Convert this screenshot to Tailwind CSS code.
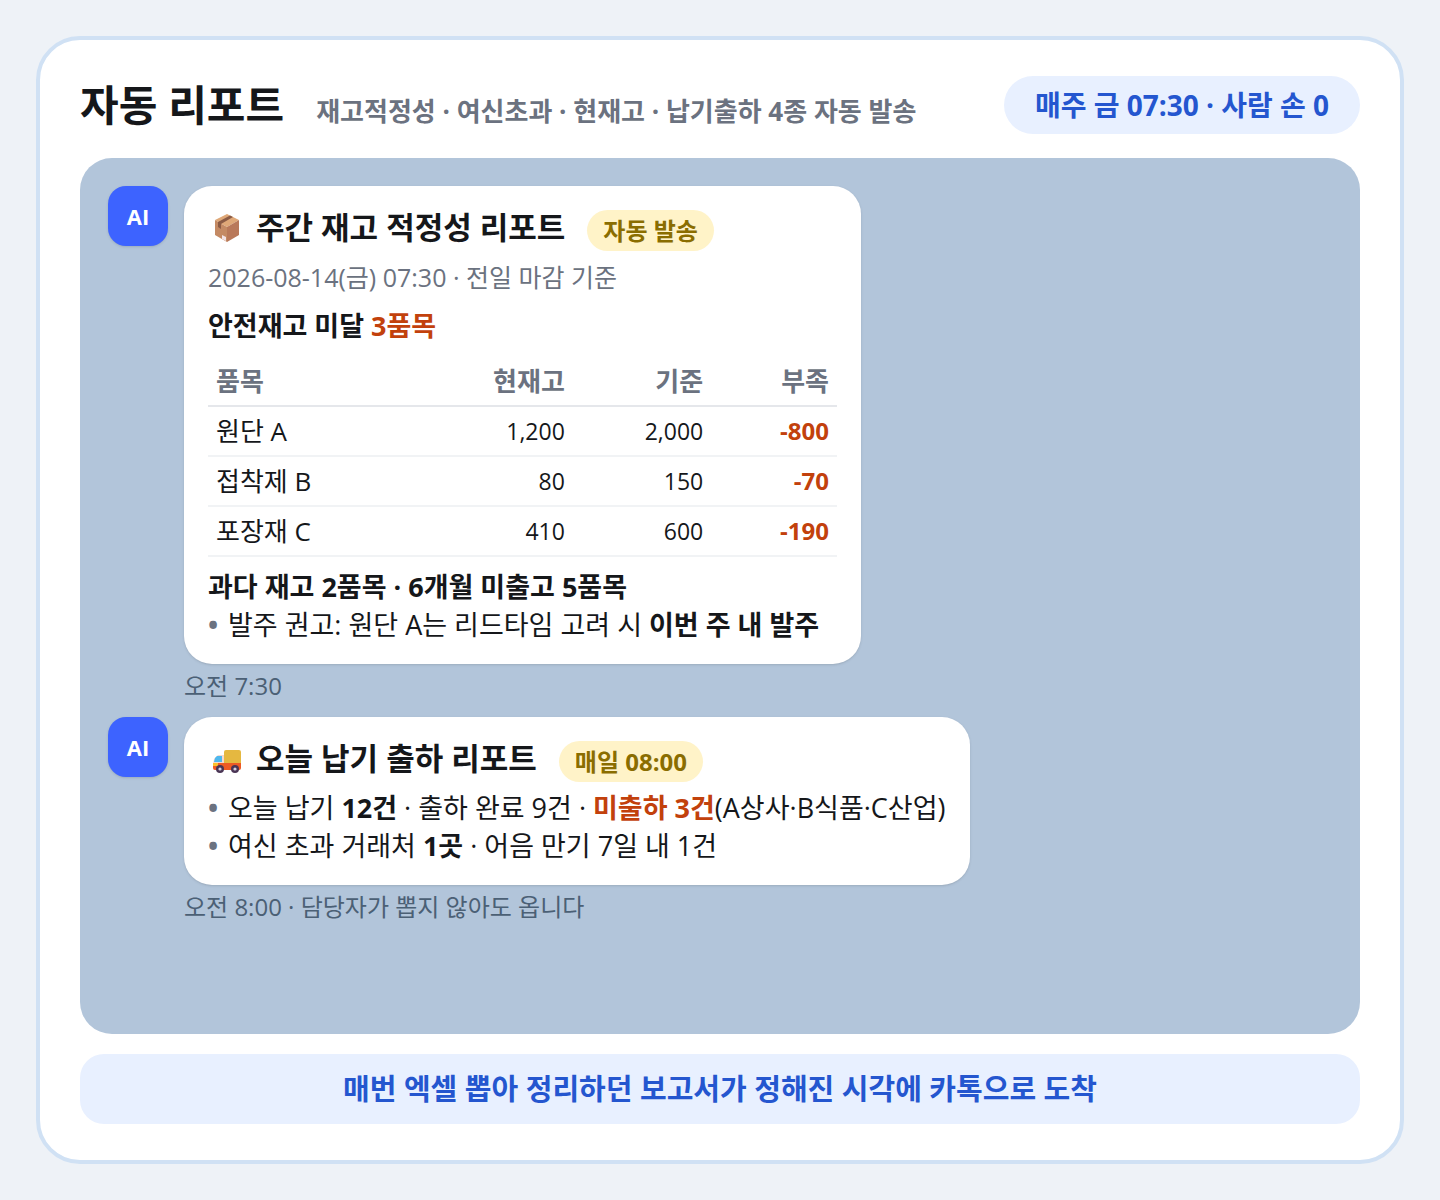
<!DOCTYPE html>
<html lang="ko">
<head>
    <meta charset="UTF-8">
    <meta name="viewport" content="width=device-width, initial-scale=1.0">
    <title>자동 리포트</title>
    <script src="https://cdn.jsdelivr.net/npm/@tailwindcss/browser@4"></script>
</head>
<body class="min-h-screen flex bg-[#eef2f7] p-9 text-[#15171a] font-['Open_Sans','Noto_Sans_CJK_KR',sans-serif]">

    <main class="flex-1 flex flex-col bg-white border-4 border-[#d0e1f4] rounded-[44px] px-10 pt-9 pb-9">

        <!-- Header -->
        <header class="flex items-center justify-between">
            <div class="flex items-baseline gap-8">
                <h1 class="text-[42px] leading-[58px] font-bold">자동 리포트</h1>
                <p class="text-[26px] font-bold text-[#6b7280]">재고적정성 · 여신초과 · 현재고 · 납기출하 4종 자동 발송</p>
            </div>
            <p class="bg-[#e8f0ff] text-[#2456cf] text-[28px] leading-[58px] font-bold rounded-full px-7 min-w-[356px] text-center whitespace-nowrap">매주 금 07:30 · 사람 손 0</p>
        </header>

        <!-- Chat area -->
        <section class="flex-1 mt-6 bg-[#b2c5da] rounded-[32px] p-7 flex flex-col gap-[15px]">

            <article class="flex items-start gap-4">
                <div class="w-15 h-15 shrink-0 rounded-[18px] bg-[#3d63ff] text-white text-[22px] font-bold flex items-center justify-center shadow-sm">AI</div>
                <div>
                    <div class="w-fit min-w-[677px] bg-white rounded-[28px] px-6 pt-6 pb-5 text-[27px] leading-[38px] shadow-sm">
                        <div class="flex items-start mb-[7px]">
                            <svg class="w-[38px] h-[38px] shrink-0 mr-[10px]" viewBox="0 0 38 38">
                                <path d="M19 4 31 10 19 17 7 10Z" fill="#dfa878"/>
                                <path d="M7 10 19 17V32L7 25Z" fill="#c48a64"/>
                                <path d="M31 10 19 17V32L31 25Z" fill="#b9795a"/>
                                <path d="M22 5.5 25 7 13 14V19L10 17V12Z" fill="#8b5b45"/>
                                <path d="M14 25 18 27V31L14 29Z" fill="#f2e3e6"/>
                            </svg>
                            <h2 class="text-[31px] leading-[34px] font-bold">주간 재고 적정성 리포트</h2>
                            <span class="ml-[22px] px-4 rounded-full bg-[#fff3c8] text-[#8a6d00] text-[24px] leading-[41px] font-bold">자동 발송</span>
                        </div>
                        <p class="text-[25px] text-[#6b7280]">2026-08-14(금) 07:30 · 전일 마감 기준</p>
                        <p class="mt-[11px] font-bold">안전재고 미달 <span class="text-[#c2410c]">3품목</span></p>
                        <table class="w-full my-[11px] text-[26px]">
                            <thead>
                                <tr class="h-[50px] border-b-2 border-[#e5e7eb] text-[#6b7280]">
                                    <th class="px-2 text-left">품목</th>
                                    <th class="px-2 text-right w-[22%]">현재고</th>
                                    <th class="px-2 text-right w-[22%]">기준</th>
                                    <th class="px-2 text-right w-[20%]">부족</th>
                                </tr>
                            </thead>
                            <tbody>
                                <tr class="h-[50px] border-b-2 border-[#f1f3f5]">
                                    <td class="px-2">원단 A</td>
                                    <td class="px-2 text-right text-[23px]">1,200</td>
                                    <td class="px-2 text-right text-[23px]">2,000</td>
                                    <td class="px-2 text-right text-[24px] font-bold text-[#c2410c]">-800</td>
                                </tr>
                                <tr class="h-[50px] border-b-2 border-[#f1f3f5]">
                                    <td class="px-2">접착제 B</td>
                                    <td class="px-2 text-right text-[23px]">80</td>
                                    <td class="px-2 text-right text-[23px]">150</td>
                                    <td class="px-2 text-right text-[24px] font-bold text-[#c2410c]">-70</td>
                                </tr>
                                <tr class="h-[50px] border-b-2 border-[#f1f3f5]">
                                    <td class="px-2">포장재 C</td>
                                    <td class="px-2 text-right text-[23px]">410</td>
                                    <td class="px-2 text-right text-[23px]">600</td>
                                    <td class="px-2 text-right text-[24px] font-bold text-[#c2410c]">-190</td>
                                </tr>
                            </tbody>
                        </table>
                        <p class="font-bold">과다 재고 2품목 · 6개월 미출고 5품목</p>
                        <ul>
                            <li class="flex"><span class="w-5 shrink-0 font-bold text-[#6b7280]">•</span><span>발주 권고: 원단 A는 리드타임 고려 시 <b>이번 주 내 발주</b></span></li>
                        </ul>
                    </div>
                    <p class="mt-1.5 text-[24px] leading-8 text-[#4b6075]">오전 7:30</p>
                </div>
            </article>

            <article class="flex items-start gap-4">
                <div class="w-15 h-15 shrink-0 rounded-[18px] bg-[#3d63ff] text-white text-[22px] font-bold flex items-center justify-center shadow-sm">AI</div>
                <div>
                    <div class="w-fit bg-white rounded-[28px] px-6 pt-6 pb-5 text-[27px] leading-[38px] shadow-sm">
                        <div class="flex items-start mb-[7px]">
                            <svg class="w-[38px] h-[38px] shrink-0 mr-[10px]" viewBox="0 0 38 38">
                                <rect x="16" y="9" width="17" height="15" rx="2" fill="#e5b840"/>
                                <path d="M10 14H16V23H5L6 18Z" fill="#f5d9d0"/>
                                <path d="M9 15H14V21H6L7 17Z" fill="#4fb8ee"/>
                                <path d="M5 22H33V27Q33 29 31 29H7Q5 29 5 27Z" fill="#ee5a24"/>
                                <path d="M5 22H10V25H5Z" fill="#fbc02d"/>
                                <circle cx="12" cy="28" r="4" fill="#4a3555"/>
                                <circle cx="12" cy="28" r="1.6" fill="#d5cfe0"/>
                                <circle cx="27" cy="28" r="4" fill="#4a3555"/>
                                <circle cx="27" cy="28" r="1.6" fill="#d5cfe0"/>
                            </svg>
                            <h2 class="text-[31px] leading-[34px] font-bold">오늘 납기 출하 리포트</h2>
                            <span class="ml-[22px] px-4 rounded-full bg-[#fff3c8] text-[#8a6d00] text-[24px] leading-[41px] font-bold">매일 08:00</span>
                        </div>
                        <ul>
                            <li class="flex"><span class="w-5 shrink-0 font-bold text-[#6b7280]">•</span><span>오늘 납기 <b>12건</b> · 출하 완료 9건 · <b class="text-[#c2410c]">미출하 3건</b>(A상사·B식품·C산업)</span></li>
                            <li class="flex"><span class="w-5 shrink-0 font-bold text-[#6b7280]">•</span><span>여신 초과 거래처 <b>1곳</b> · 어음 만기 7일 내 1건</span></li>
                        </ul>
                    </div>
                    <p class="mt-1.5 text-[24px] leading-8 text-[#4b6075]">오전 8:00 · 담당자가 뽑지 않아도 옵니다</p>
                </div>
            </article>
        </section>

        <!-- Bottom banner -->
        <footer class="mt-5 bg-[#e8f0ff] rounded-[24px] text-center text-[29px] leading-[70px] font-bold text-[#2456cf]">매번 엑셀 뽑아 정리하던 보고서가 정해진 시각에 카톡으로 도착</footer>
    </main>

</body>
</html>
